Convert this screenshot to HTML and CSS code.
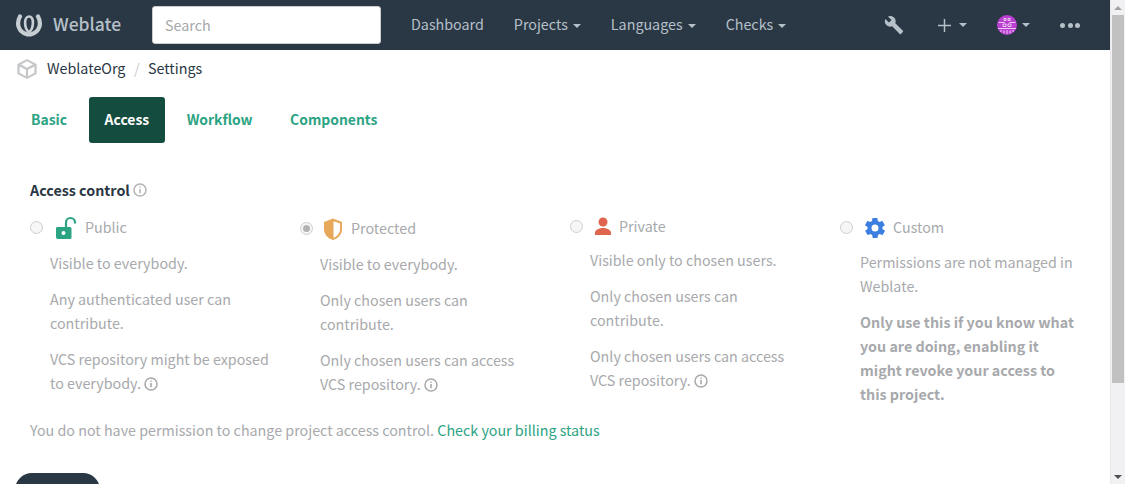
FILE: index.html
```html
<!DOCTYPE html>
<html lang="en">
<head>
<meta charset="utf-8">
<title>Settings - WeblateOrg</title>
<link rel="stylesheet" href="styles.css">
</head>
<body>
<div class="viewport">
  <div class="page">
    <nav class="navbar">
      <a class="brand">
        <svg class="logo" viewBox="0 0 28 24" width="28" height="24"><path class="logo-a" d="M5 3.500C1.200 10 3 19.500 12.500 21.500"/><path class="logo-a" d="M23 3.500C26.800 10 25 19.500 15.500 21.500"/><path class="logo-b" d="M14 19.500C8.800 15 8.800 3.500 14 3.500S19.200 15 14 19.500z"/></svg>
        <span>Weblate</span>
      </a>
      <input class="search" type="text" placeholder="Search">
      <ul class="menu">
        <li>Dashboard</li>
        <li class="caret-item">Projects</li>
        <li class="caret-item">Languages</li>
        <li class="caret-item">Checks</li>
      </ul>
      <div class="tools">
        <svg class="tool-wrench" viewBox="0 0 24 24" width="24" height="24"><path d="M22.700 19l-9.100-9.100c.9-2.300.4-5-1.500-6.900-2-2-5-2.400-7.400-1.300L9 6 6 9 1.600 4.700C.4 7.100.9 10.100 2.900 12.100c1.900 1.900 4.600 2.400 6.900 1.500l9.100 9.100c.4.400 1 .4 1.400 0l2.300-2.300c.5-.4.500-1.100.1-1.400z"/></svg>
        <div class="tool-add">
          <svg viewBox="0 0 14 14" width="13" height="13"><path d="M6.200 0h1.600v6.200H14v1.600H7.800V14H6.200V7.800H0V6.200h6.200z"/></svg>
          <i class="caret"></i>
        </div>
        <div class="tool-user">
          <svg class="avatar" viewBox="0 0 20 20" width="20" height="20">
            <circle cx="10" cy="10" r="10" fill="#b93fd0"/>
            <path d="M7 3.500h2v2H7zM11 3.500h2v2h-2zM1.500 7.500h6M12.500 7.500h6M6 9h3v2.500H6zM11 9h3v2.500h-3zM1 13.500h18M4 15v2M7 15.500v3M10 15v4M13 15.500v3M16 15v2" fill="none" stroke="#f3d8f8" stroke-width=".9"/>
          </svg>
          <i class="caret"></i>
        </div>
        <div class="dots"><i></i><i></i><i></i></div>
      </div>
    </nav>

    <div class="crumbs">
      <svg class="cube" viewBox="0 0 24 24" width="22" height="22"><path d="M12 1 1.500 6.500v11L12 23l10.500-5.500v-11zM12 3.500 18.500 7 12 10.500 5.500 7zM4 9.200l6.800 3.600v7L4 16.200zM20 16.200l-6.800 3.600v-7L20 9.200z"/></svg>
      <a class="crumb-text">WeblateOrg</a>
      <span class="sep crumb-text">/</span>
      <a class="crumb-text">Settings</a>
    </div>

    <ul class="tabs">
      <li>Basic</li>
      <li class="active">Access</li>
      <li>Workflow</li>
      <li>Components</li>
    </ul>

    <section class="panel">
      <div class="field-title">
        <span>Access control</span>
        <svg class="info" viewBox="0 0 14 14" width="14" height="14"><circle cx="7" cy="7" r="6"/><path class="info-i" d="M7 6v4.200M7 3.400v1.400"/></svg>
      </div>

      <div class="choices">
        <div class="choice">
          <div class="choice-head head-public">
            <i class="radio"></i>
            <svg class="kind" viewBox="0 0 24 24" width="24" height="24"><path fill="#2ca383" d="M3 11h13a1.500 1.500 0 0 1 1.500 1.500v9A1.500 1.500 0 0 1 16 23H4a2 2 0 0 1-2-2v-8.500A1.500 1.500 0 0 1 3 11z"/><circle cx="9.500" cy="17" r="2" fill="#fff"/><path fill="none" stroke="#2ca383" stroke-width="2.200" d="M12 11V6.500a4.500 4.500 0 0 1 9 0v1"/></svg>
            <span class="kind-name">Public</span>
          </div>
          <div class="choice-body">
            <p>Visible to everybody.</p>
            <p>Any authenticated user can contribute.</p>
            <p>VCS repository might be exposed to everybody. <svg class="info inline" viewBox="0 0 14 14" width="14" height="14"><circle cx="7" cy="7" r="6"/><path class="info-i" d="M7 6v4.200M7 3.400v1.400"/></svg></p>
          </div>
        </div>

        <div class="choice">
          <div class="choice-head head-protected">
            <i class="radio checked"></i>
            <svg class="kind" viewBox="0 0 24 24" width="24" height="24"><path fill="#e8a85c" d="M12 1.500 3 5v7c0 5.300 3.800 9.500 9 11 5.200-1.500 9-5.700 9-11V5z"/><path fill="#fff" d="M12.500 4.200 19 6.500V12c0 3.900-2.600 7.300-6.500 8.800z"/></svg>
            <span class="kind-name">Protected</span>
          </div>
          <div class="choice-body">
            <p>Visible to everybody.</p>
            <p>Only chosen users can contribute.</p>
            <p>Only chosen users can access VCS repository. <svg class="info inline" viewBox="0 0 14 14" width="14" height="14"><circle cx="7" cy="7" r="6"/><path class="info-i" d="M7 6v4.200M7 3.400v1.400"/></svg></p>
          </div>
        </div>

        <div class="choice">
          <div class="choice-head head-private">
            <i class="radio"></i>
            <svg class="kind" viewBox="0 0 24 24" width="24" height="24"><circle cx="12" cy="7" r="4.500" fill="#e0654e"/><path fill="#e0654e" d="M12 13c-4.800 0-8 2.400-8 4.800V20h16v-2.200c0-2.400-3.200-4.800-8-4.800z"/></svg>
            <span class="kind-name">Private</span>
          </div>
          <div class="choice-body">
            <p>Visible only to chosen users.</p>
            <p>Only chosen users can contribute.</p>
            <p>Only chosen users can access VCS repository. <svg class="info inline" viewBox="0 0 14 14" width="14" height="14"><circle cx="7" cy="7" r="6"/><path class="info-i" d="M7 6v4.200M7 3.400v1.400"/></svg></p>
          </div>
        </div>

        <div class="choice">
          <div class="choice-head head-custom">
            <i class="radio"></i>
            <svg class="kind" viewBox="0 0 24 24" width="24" height="24"><path fill="#3d7fe0" fill-rule="evenodd" d="M19.400 13c.1-.3.100-.7.100-1s0-.7-.1-1l2.100-1.600c.2-.2.200-.4.100-.6l-2-3.500c-.1-.2-.4-.3-.6-.2l-2.500 1c-.5-.4-1.100-.7-1.700-1l-.4-2.600c0-.3-.2-.4-.5-.4h-4c-.2 0-.4.100-.5.400l-.4 2.600c-.6.300-1.200.6-1.700 1l-2.500-1c-.2-.1-.5 0-.6.200l-2 3.500c-.1.200-.1.400.1.600L4.600 11c0 .3-.1.700-.1 1s0 .7.100 1l-2.100 1.600c-.2.200-.2.400-.1.600l2 3.500c.1.200.4.300.6.200l2.500-1c.5.400 1.100.7 1.700 1l.4 2.600c.1.300.3.400.5.400h4c.3 0 .5-.1.500-.4l.4-2.600c.6-.3 1.200-.6 1.700-1l2.500 1c.2.100.5 0 .6-.2l2-3.500c.1-.2.1-.4-.1-.6zM12 15.500a3.500 3.500 0 1 1 0-7 3.500 3.500 0 0 1 0 7z"/></svg>
            <span class="kind-name">Custom</span>
          </div>
          <div class="choice-body">
            <p>Permissions are not managed in Weblate.</p>
            <p class="strong">Only use this if you know what you are doing, enabling it might revoke your access to this project.</p>
          </div>
        </div>
      </div>

      <p class="notice">You do not have permission to change project access control. <a>Check your billing status</a></p>

      <button class="save" type="button">Save</button>
    </section>
  </div>

  <div class="scrollbar">
    <i class="arrow up"></i>
    <div class="track"><div class="thumb"></div></div>
    <i class="arrow down"></i>
  </div>
</div>
</body>
</html>
```
FILE: styles.css
```css
* { box-sizing: border-box; }
html, body { margin: 0; padding: 0; height: 100%; overflow: hidden; }
body {
  font-family: "Noto Sans CJK SC", "Source Sans Pro", "Noto Sans", sans-serif;
  font-size: 14.3px;
  line-height: 24px;
  color: #2a3744;
  background: #fff;
}
.viewport { display: flex; height: 484px; overflow: hidden; }
.page { flex: 1; min-width: 0; overflow: hidden; }

/* navbar */
.navbar { display: flex; align-items: center; height: 50px; background: #2a3744; padding-left: 15px; }
.brand { display: flex; align-items: center; gap: 10px; width: 137px; color: #b6c0c9; font-size: 17.500px; font-weight: 500; }
.brand span { padding-bottom: 2px; }
.logo { display: block; }
.logo-a, .logo-b { fill: none; stroke-linecap: round; }
.logo-a { stroke: #c6ced4; stroke-width: 4.200; }
.logo-b { stroke: #c6ced4; stroke-width: 2.600; }
.search {
  width: 229px; height: 38px; padding: 0 12px 2px; border: 1px solid #ccc; border-radius: 3px;
  background: #fff; font: inherit; color: #2a3744; outline: none;
}
.search::placeholder { color: #a6a8ab; opacity: 1; }
.menu { list-style: none; display: flex; margin: 0 0 0 15px; padding: 0 0 2px; color: #b6c0c9; }
.menu li { padding: 0 15px; }
.caret-item::after, .caret {
  content: ""; display: inline-block; width: 0; height: 0; vertical-align: middle;
  border-left: 4px solid transparent; border-right: 4px solid transparent; border-top: 4px solid #b6c0c9;
}
.caret-item::after { margin-left: 5px; }
.tools { display: flex; align-items: center; margin-left: auto; padding-right: 30px; }
.tool-wrench { width: 20px; height: 20px; margin-right: 34px; }
.tool-wrench path { fill: #b6c0c9; }
.tool-add { display: flex; align-items: center; gap: 8px; margin-right: 30px; }
.tool-add svg { fill: #b6c0c9; display: block; }
.tool-user { display: flex; align-items: center; gap: 5px; margin-right: 30px; }
.avatar { display: block; }
.dots { display: flex; gap: 2.500px; }
.dots i { width: 5px; height: 5px; border-radius: 50%; background: #b6c0c9; }

/* breadcrumb */
.crumbs { display: flex; align-items: center; height: 38px; padding-left: 16px; color: #2a3744; }
.crumb-text { padding-bottom: 2px; }
.cube { fill: #c5c7c9; margin-right: 9px; }
.sep { color: #ccc; margin: 0 8.500px; }

/* tabs */
.tabs { list-style: none; display: flex; height: 46px; margin: 9px 0 0; padding: 0 0 0 15px; font-weight: 700; font-size: 13.900px; color: #2ca383; }
.tabs li { padding: 10px 16px; height: 46px; border-radius: 3px; margin-right: 5.500px; white-space: nowrap; }
.tabs .active { background: #144d3f; color: #fff; }

/* panel */
.panel { padding: 35px 15px 0; }
.field-title { display: flex; align-items: center; gap: 3px; height: 24px; margin: 0 15px; font-weight: 700; font-size: 14.300px; color: #2a3744; }
.info { display: inline-block; flex: none; }
.info circle { fill: none; stroke: #b4b4b4; stroke-width: 1.500; }
.info-i { stroke: #b4b4b4; stroke-width: 1.600; fill: none; }
.info.inline { vertical-align: -2px; }
.info.inline circle, .info.inline .info-i { stroke: #a9a9a9; }

.choices { display: flex; color: #a7a9ac; }
.choice { width: 270px; padding: 0 15px; }
.choice-head { display: flex; align-items: center; color: #a7a9ac; }
.head-public { height: 43px; margin-top: 4px; margin-bottom: 2px; }
.head-protected { height: 43px; margin-top: 5px; margin-bottom: 2px; }
.head-private { height: 43px; margin-top: 3px; }
.head-custom { height: 41px; margin-top: 5px; margin-bottom: 2px; }
.kind-name { padding-bottom: 1px; }
.radio { display: block; width: 13px; height: 13px; margin-right: 11px; border-radius: 50%; border: 1px solid #cfcfcf; background: #f6f6f6; flex: none; position: relative; }
.radio.checked::after { content: ""; position: absolute; left: 2px; top: 2px; width: 7px; height: 7px; border-radius: 50%; background: #b3b3b3; }
.kind { flex: none; display: block; margin-right: 7px; }
.head-protected .radio, .head-private .radio { margin-right: 8px; }
.head-custom .radio { margin-right: 10px; }
.head-protected .kind { margin-right: 6px; }
.head-private .kind { margin-right: 4px; }
.head-custom .kind { margin-right: 6px; }
.choice-body { padding-left: 20px; }
.choice-body p { margin: 0 0 12px; }
.strong { font-weight: 700; }
.notice { margin: 0 15px; color: #a7a9ac; }
.notice a { color: #2ca383; }
.save {
  display: block; width: 85px; height: 46px; margin: 31px 0 0; padding: 0; border: 0; border-radius: 17px;
  background: #2a3744; color: #fff; font: inherit;
}

/* scrollbar */
.scrollbar { flex: none; width: 15px; height: 100%; display: flex; flex-direction: column; background: #f1f0f3; border-left: 1px solid #e9e8ec; }
.arrow { flex: none; height: 15px; display: flex; align-items: center; justify-content: center; }
.arrow::before { content: ""; border-left: 4px solid transparent; border-right: 4px solid transparent; }
.up::before { border-bottom: 4px solid #a3a3a3; }
.down::before { border-top: 4px solid #505050; }
.track { flex: 1; padding: 0 1px; }
.thumb { height: 368px; background: #c1c1c1; }
```
